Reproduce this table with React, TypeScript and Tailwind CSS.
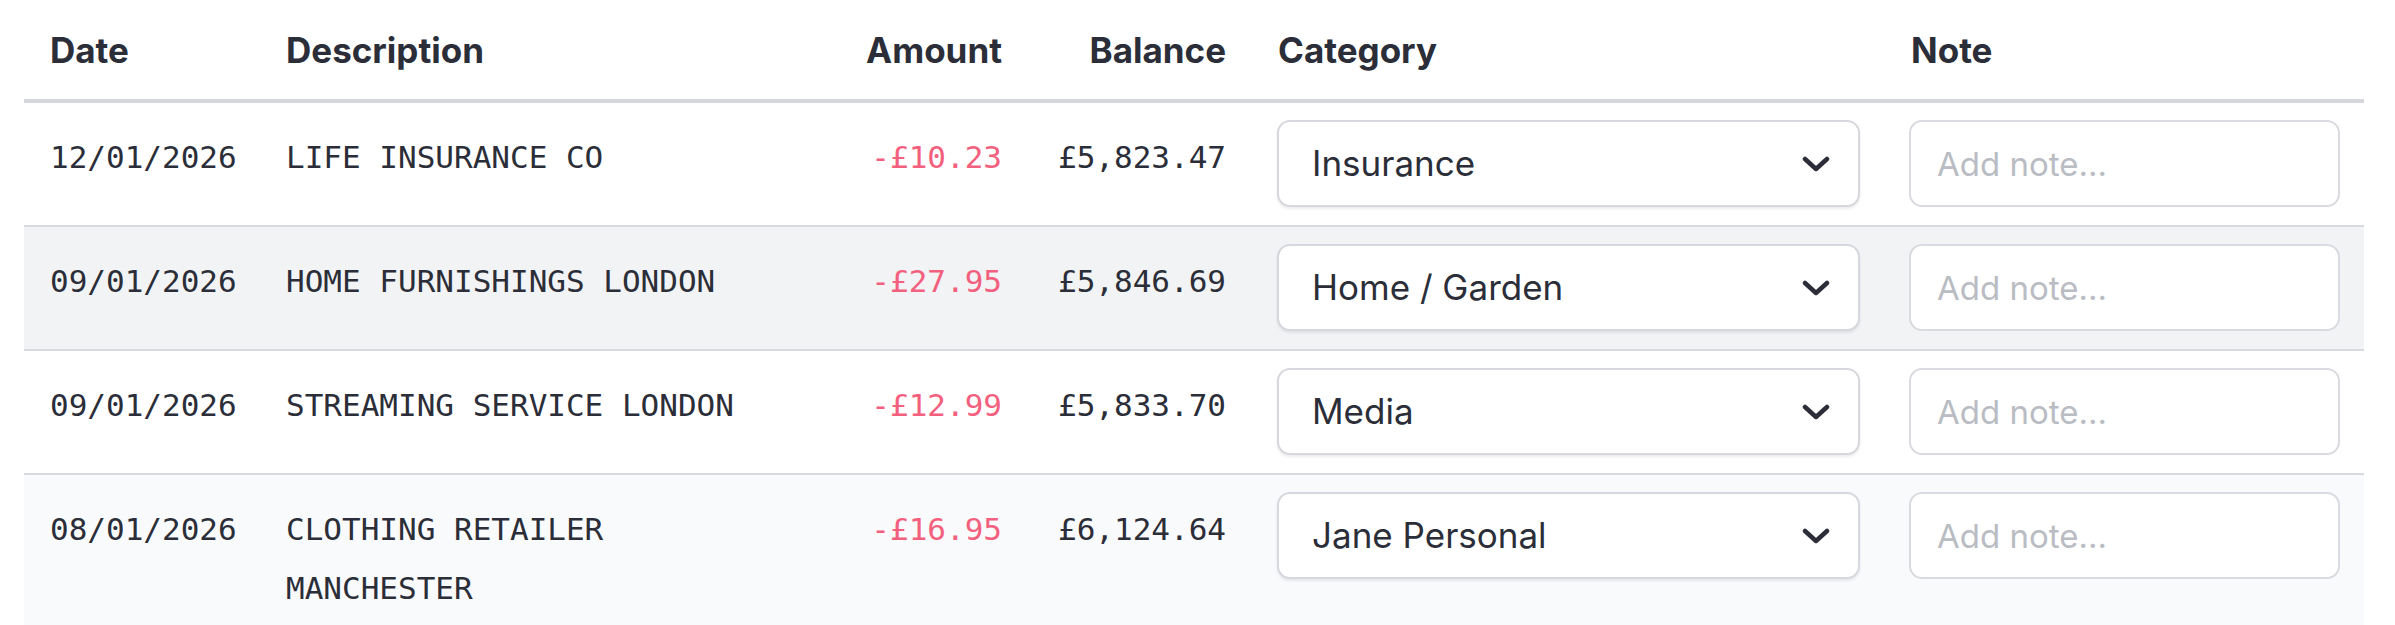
import React from 'react'

interface Txn {
  date: string
  description: string
  amount: string
  balance: string
  category: string
}

const txns: Txn[] = [
  { date: '12/01/2026', description: 'LIFE INSURANCE CO', amount: '-£10.23', balance: '£5,823.47', category: 'Insurance' },
  { date: '09/01/2026', description: 'HOME FURNISHINGS LONDON', amount: '-£27.95', balance: '£5,846.69', category: 'Home / Garden' },
  { date: '09/01/2026', description: 'STREAMING SERVICE LONDON', amount: '-£12.99', balance: '£5,833.70', category: 'Media' },
  { date: '08/01/2026', description: 'CLOTHING RETAILER MANCHESTER', amount: '-£16.95', balance: '£6,124.64', category: 'Jane Personal' },
]

const rowBg = ['bg-white', 'bg-[#f2f3f5]', 'bg-white', 'bg-[#f9fafb]']

function Chevron() {
  return (
    <svg className="w-[28px] h-[16px] shrink-0" viewBox="0 0 28 16" fill="none" stroke="#2b2e38">
      <path d="M3 3 L14 13 L25 3" strokeWidth={4.5} strokeLinecap="round" strokeLinejoin="round" />
    </svg>
  )
}

export default function App() {
  return (
    <div className="min-h-screen bg-white font-['Inter',sans-serif] text-[#2b2e38]">
      <table className="ml-[24px] w-[2340px] table-fixed border-collapse">
        <colgroup>
          <col className="w-[236px]" />
          <col className="w-[568px]" />
          <col className="w-[200px]" />
          <col className="w-[224px]" />
          <col className="w-[633px]" />
          <col className="w-[479px]" />
        </colgroup>
        <thead>
          <tr className="border-b-4 border-[#d5d7dd] h-[101px]">
            <th className="px-[26px] pt-[2px] text-left text-[35px] font-bold leading-none">Date</th>
            <th className="px-[26px] pt-[2px] text-left text-[35px] font-bold leading-none">Description</th>
            <th className="px-[26px] pt-[2px] text-right text-[35px] font-bold leading-none">Amount</th>
            <th className="px-[26px] pt-[2px] text-right text-[35px] font-bold leading-none">Balance</th>
            <th className="px-[26px] pt-[2px] text-left text-[35px] font-bold leading-none">Category</th>
            <th className="px-[26px] pt-[2px] text-left text-[35px] font-bold leading-none">Note</th>
          </tr>
        </thead>
        <tbody>
          {txns.map((t, i) => (
            <tr key={i} className={`border-b-2 border-[#d8dae0] ${rowBg[i]}`}>
              <td className="align-top px-[26px] pt-[25px] pb-[18px] font-['DejaVu_Sans_Mono',monospace] text-[31px] leading-[59px]">
                {t.date}
              </td>
              <td className="align-top px-[26px] pt-[25px] pb-[18px] font-['DejaVu_Sans_Mono',monospace] text-[31px] leading-[59px]">
                {t.description}
              </td>
              <td className="align-top px-[26px] pt-[25px] pb-[18px] text-right font-['DejaVu_Sans_Mono',monospace] text-[31px] leading-[59px] text-[#f3607e]">
                {t.amount}
              </td>
              <td className="align-top px-[26px] pt-[25px] pb-[18px] text-right font-['DejaVu_Sans_Mono',monospace] text-[31px] leading-[59px]">
                {t.balance}
              </td>
              <td className="align-top px-[25px] pt-[17px] pb-[18px]">
                <div className="flex h-[87px] items-center justify-between rounded-[13px] border-2 border-[#d6d8de] bg-white pl-[33px] pr-[28px] shadow-[0_2px_3px_rgba(0,0,0,0.08)]">
                  <span className="text-[35px] leading-none">{t.category}</span>
                  <Chevron />
                </div>
              </td>
              <td className="align-top pl-[24px] pr-[24px] pt-[17px] pb-[18px]">
                <input
                  type="text"
                  placeholder="Add note..."
                  className="h-[87px] w-full rounded-[13px] border-2 border-[#d9dbe0] bg-white px-[26px] text-[33px] outline-none placeholder:text-[#b9bcc3]"
                />
              </td>
            </tr>
          ))}
        </tbody>
      </table>
    </div>
  )
}
